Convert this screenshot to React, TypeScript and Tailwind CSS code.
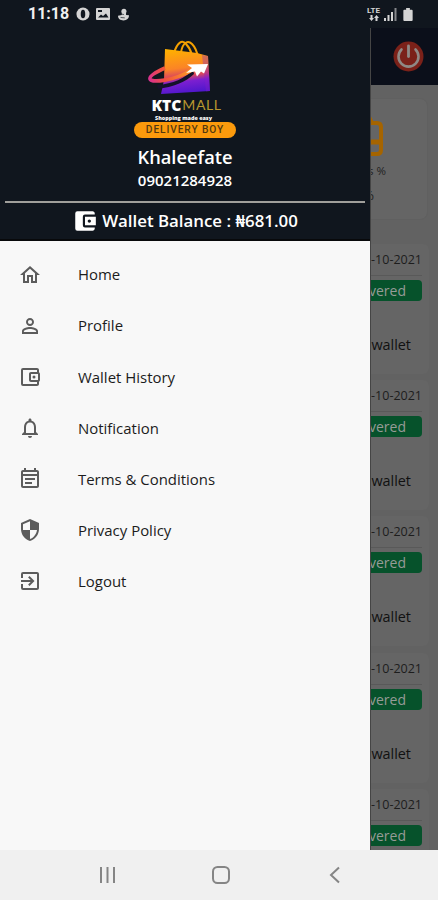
import React from 'react';
import type { IconType } from 'react-icons';
import {
    MdAccountBalanceWallet,
    MdExitToApp,
    MdNotificationsNone,
    MdOutlineAccountBalanceWallet,
    MdOutlineEventNote,
    MdOutlineHome,
    MdPersonOutline,
    MdSecurity,
} from 'react-icons/md';

const menuItems: { label: string; icon: IconType }[] = [
    { label: 'Home', icon: MdOutlineHome },
    { label: 'Profile', icon: MdPersonOutline },
    { label: 'Wallet History', icon: MdOutlineAccountBalanceWallet },
    { label: 'Notification', icon: MdNotificationsNone },
    { label: 'Terms & Conditions', icon: MdOutlineEventNote },
    { label: 'Privacy Policy', icon: MdSecurity },
    { label: 'Logout', icon: MdExitToApp },
];

const orders = [1, 2, 3, 4, 5];

const StatusBar: React.FC = () => (
    <div className="h-7 shrink-0 bg-[#10161e] flex items-center justify-between pl-7 pr-[25px] text-[#d4d4d4]">
        <div className="flex items-center">
            <span className="w-[43px] font-[Roboto] text-[16px] font-bold leading-none text-[#f0f0f0]">11:18</span>
            <svg className="ml-[5px] w-[14px] h-[14px]" viewBox="0 0 15 15">
                <circle cx="7.5" cy="7.5" r="7" fill="currentColor" />
                <ellipse cx="7.5" cy="7.5" rx="2.4" ry="4.6" fill="#10161e" />
            </svg>
            <svg className="ml-[6px] w-[14px] h-[12px]" viewBox="0 0 14 12">
                <rect width="14" height="12" rx="1" fill="currentColor" />
                <path d="M2 9.500l3-3 2 1.500 3-2.500 2.500 4zM2 2h4v2H2z" fill="#10161e" />
            </svg>
            <svg className="ml-[8px] w-[11px] h-[13px]" viewBox="0 0 13 14" fill="currentColor">
                <circle cx="7" cy="3.2" r="3" />
                <path d="M4.500 4h5v3.500l3.500.5c0 4-2.500 6-6.500 6S0 12 0 8.500l4.500-1z" />
                <path d="M3 10.500l5 .5M4 6.500l3 .5" stroke="#10161e" strokeWidth=".8" />
            </svg>
        </div>
        <div className="flex items-center">
            <div className="flex flex-col items-center w-[15px]">
                <span className="font-[Roboto] text-[8px] font-bold leading-[8px]">LTE</span>
                <svg className="w-[10px] h-[6px]" viewBox="0 0 10 6" fill="currentColor">
                    <path d="M2.500 6L0 3h1.500V0h2v3H5zM7.500 0L10 3H8.500v3h-2V3H5z" />
                </svg>
            </div>
            <svg className="ml-[3px] w-[13px] h-[13px]" viewBox="0 0 13 13" fill="currentColor">
                <path d="M0 10h2v3H0zM3.500 7h2v6h-2zM7 4h2v9H7z" />
                <path d="M10.500 0h2v13h-2z" opacity=".6" />
            </svg>
            <svg className="ml-[6px] w-[10px] h-[13px]" viewBox="0 0 10 14" fill="currentColor">
                <path d="M3 0h4v2h2a1 1 0 0 1 1 1v10a1 1 0 0 1-1 1H1a1 1 0 0 1-1-1V3a1 1 0 0 1 1-1h2z" />
            </svg>
        </div>
    </div>
);

const Logo: React.FC = () => (
    <div className="flex flex-col items-center">
        <svg className="w-[64px] h-[56px] mr-[10px]" viewBox="0 0 64 56" fill="none">
            <defs>
                <linearGradient id="bag" x1="36" y1="8" x2="42" y2="54" gradientUnits="userSpaceOnUse">
                    <stop offset="0" stopColor="#ffb000" />
                    <stop offset=".42" stopColor="#fb8426" />
                    <stop offset=".6" stopColor="#d8455f" />
                    <stop offset=".72" stopColor="#7c1fd0" />
                    <stop offset="1" stopColor="#4a16cc" />
                </linearGradient>
                <linearGradient id="strap" x1="0" y1="44" x2="42" y2="30" gradientUnits="userSpaceOnUse">
                    <stop offset="0" stopColor="#d52b9b" />
                    <stop offset=".4" stopColor="#f0503f" />
                    <stop offset="1" stopColor="#ff9a26" />
                </linearGradient>
            </defs>
            <path d="M26 13C29 3 34-1 38 4c3 3 5 7 6 11M33 12C35 2 40 0 44 4c3 3 5 8 6 13" stroke="#f5a000" strokeWidth="2" />
            <path d="M17 9l32 4 11 3 2 35-49 3 3-14z" fill="url(#bag)" />
            <path d="M54 15l6 1 2 35-4 .5z" fill="#8420c5" opacity=".35" />
            <path d="M9 45c16-1 28-7 36-15l1 4C38 42 25 47 10 49z" fill="#14122a" />
            <path d="M17 28C8 32 1 36 2 39c1 4 24 2 42-9" stroke="url(#strap)" strokeWidth="3.600" />
            <path d="M60 24l-21 .5 5 3.500-6 5 9-1.500 2 5 4-5 3 2z" fill="#fff" />
        </svg>
        <div className="ml-[3px] flex items-center h-[18px] font-['Open_Sans']">
            <span className="text-[15.5px] font-extrabold leading-[18px] text-white">KTC</span>
            <span className="ml-px font-[Lato] text-[14px] leading-[18px] tracking-[0.6px] text-[#b8962f]">MALL</span>
        </div>
        <span className="mr-[3px] h-[8px] font-['Open_Sans'] text-[5.4px] font-extrabold leading-[8px] text-white">Shopping made easy</span>
        <div className="w-[102px] h-4 rounded-full bg-[#fc9a0c] flex items-center justify-center">
            <span className="font-[Roboto] text-[10.2px] font-medium tracking-[0.9px] leading-none text-[#54390f]">DELIVERY BOY</span>
        </div>
    </div>
);

const Drawer: React.FC = () => (
    <aside className="w-[370px] shrink-0 flex flex-col bg-[#f8f8f8]">
        <header className="h-[213px] shrink-0 bg-[#10161e] border-b-2 border-[#08090b] flex flex-col items-center pt-[12px] text-white">
            <Logo />
            <h1 className="mt-[6px] text-[18.3px] font-semibold leading-[26px]">Khaleefate</h1>
            <p className="-mt-px text-[15px] font-semibold leading-[22px]">09021284928</p>
            <div className="mt-[10px] w-[360px] h-[2px] bg-[#a09f9b]" />
            <div className="mt-[5px] flex items-center h-[26px]">
                <MdAccountBalanceWallet className="w-[26px] h-[26px]" />
                <span className="ml-[4px] text-[16.85px] font-semibold leading-6">Wallet Balance : ₦681.00</span>
            </div>
        </header>
        <nav className="pt-[8px]">
            {menuItems.map(({ label, icon: Icon }) => (
                <a key={label} className="flex items-center h-[51.1px] pl-[18px] text-[#1c1c1c]">
                    <Icon className="w-6 h-6 text-[#5c5c5c]" />
                    <span className="ml-9 text-[14.95px] font-medium">{label}</span>
                </a>
            ))}
        </nav>
    </aside>
);

const OrderCard: React.FC = () => (
    <div className="mb-[6.2px] h-[130px] shrink-0 w-[200px] rounded-r-md bg-[#656565] flex flex-col items-end pr-[7px]">
        <span className="mt-[6px] text-[12.5px] leading-5 text-[#1d1d1d]">-10-2021</span>
        <div className="mt-[5px] w-full h-px bg-[#595959]" />
        <div className="mt-[4px] w-[76px] h-[21px] rounded-[4px] bg-[#06522b] flex items-center justify-end pr-[16px] text-[14px] font-medium text-[#969b97]">vered</div>
        <span className="mt-[33px] mr-[11px] text-[14.4px] font-medium leading-[22px] text-[#111]">wallet</span>
    </div>
);

// Right edge of the dashboard, dimmed behind the open drawer
const DimmedPage: React.FC = () => (
    <main className="flex-1 min-w-0 overflow-hidden flex flex-col items-end bg-[#626262] border-l border-[#454545]">
        <div className="w-[200px] h-[57px] shrink-0 bg-[#0b0f1a] flex items-center justify-end pr-[14px]">
            <svg className="w-[31px] h-[31px]" viewBox="0 0 31 31" fill="none">
                <circle cx="15.500" cy="15.500" r="15" fill="#7b2119" />
                <path d="M8.500 8.500a10 10 0 1 0 14 0" stroke="#8f8985" strokeWidth="2.600" strokeLinecap="round" />
                <path d="M15.500 5v10.500" stroke="#8f8985" strokeWidth="2.800" strokeLinecap="round" />
            </svg>
        </div>
        <div className="mt-[13px] mr-[10px] w-[109px] h-[122px] shrink-0 rounded-lg border border-[#606060] bg-[#656565] flex flex-col items-end">
            <svg className="mt-[14px] mr-[44px] w-[46px] h-[43px]" viewBox="0 0 46 43" fill="none" stroke="#a56400" strokeWidth="4">
                <path d="M9 10V2h22l4 8M4 10h36q4 0 4 4v23q0 4-4 4H4q-3 0-3-4V14q0-4 3-4z" />
                <path d="M2 29h42" strokeWidth="5" />
            </svg>
            <span className="mr-[41px] mt-[5px] whitespace-nowrap text-[11.5px] leading-5 text-[#222]">s %</span>
            <span className="mr-[53px] mt-[4px] text-[13px] font-medium leading-5 text-[#191919]">%</span>
        </div>
        <div className="mt-[24px] mr-[9px] flex-1 min-h-0 flex flex-col items-end overflow-hidden">
            {orders.map((id) => (
                <OrderCard key={id} />
            ))}
        </div>
    </main>
);

const NavigationBar: React.FC = () => (
    <footer className="h-[50px] shrink-0 bg-[#f0f0f0] flex justify-center items-center text-[#858585]">
        <svg className="w-[242px] h-[18px]" viewBox="0 0 242 18" fill="none" stroke="currentColor" strokeWidth="2">
            <path d="M3 1v16M9.500 1v16M16 1v16" />
            <rect x="115" y="1" width="16" height="16" rx="4.500" />
            <path d="M241 1.500l-8 7.500 8 7.500" />
        </svg>
    </footer>
);

const App: React.FC = () => (
    <div className="w-full h-[900px] overflow-hidden flex flex-col bg-[#f8f8f8] font-['Open_Sans','Noto_Sans',sans-serif]">
        <StatusBar />
        <div className="flex-1 min-h-0 flex">
            <Drawer />
            <DimmedPage />
        </div>
        <NavigationBar />
    </div>
);

export default App;
